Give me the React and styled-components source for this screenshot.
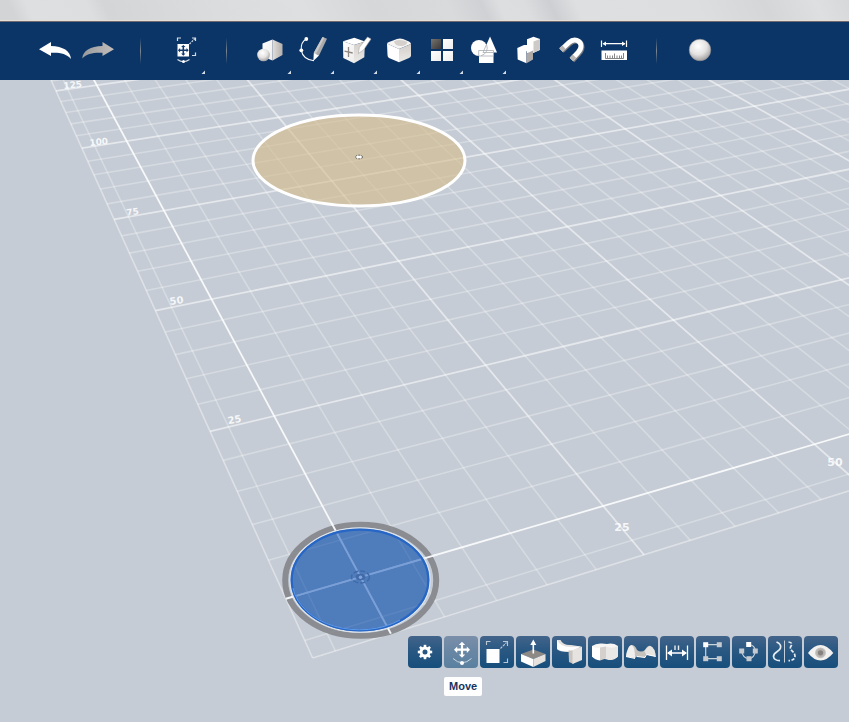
import React from "react";
import styled, { createGlobalStyle, css } from "styled-components";

const GlobalStyle = createGlobalStyle`
  * {
    box-sizing: border-box;
  }

  body {
    margin: 0;
    background: #c5ccd5;
    font-family: "Liberation Sans", Arial, sans-serif;
  }
`;

const Page = styled.div`
  display: flex;
  flex-direction: column;
  min-height: 100vh;
`;

const TopStrip = styled.div`
  height: 22px;
  border-bottom: 1px solid #6f6c70;
  box-shadow: inset 0 -1px 0 #e6dcd8;
  background: linear-gradient(
    65deg,
    #d2d4d6 0%,
    #d2d4d6 2%,
    #dddfe1 4%,
    #dcdee0 11%,
    #d3d5d7 13%,
    #dadcde 26%,
    #dddfe1 36%,
    #d5d7d9 44%,
    #d8dadc 53%,
    #cfd1d4 57%,
    #dcdee0 59%,
    #dbdddf 62%,
    #cdcfd2 65%,
    #dddfe1 68%,
    #dcdee0 82%,
    #d4d6d8 90%,
    #dddfe1 96%,
    #d6d8da 100%
  );
`;

const Toolbar = styled.nav`
  display: flex;
  height: 58px;
  padding-left: 33px;
  background: #0c3567;
`;

const ToolButton = styled.button`
  flex: none;
  width: 43px;
  height: 58px;
  padding: 0;
  border: 0;
  background: none;
  cursor: pointer;

  svg {
    display: block;
    overflow: visible;
  }
`;

const Separator = styled.span`
  flex: none;
  align-self: center;
  width: 1px;
  height: 26px;
  margin: 0 21px;
  background: linear-gradient(transparent, #7b8792, transparent);
`;

const Viewport = styled.main`
  position: relative;
  flex: 1;
  overflow: hidden;
`;

const Scene = styled.svg`
  position: absolute;
  inset: 0;
  width: 100%;
  height: 100%;
`;

const ContextBar = styled.div`
  position: absolute;
  right: 11px;
  bottom: 54px;
  display: flex;
  gap: 2px;
`;

const ContextItem = styled.div`
  position: relative;
`;

const ContextButton = styled.button`
  display: block;
  width: 34px;
  height: 32px;
  padding: 0;
  border: 0;
  border-radius: 4px;
  background: linear-gradient(#43648a, #2b5983 40%, #174e7b);
  cursor: pointer;

  ${(props) =>
    props.$active &&
    css`
      background: linear-gradient(#7b8fa9, #6987a5 45%, #5a809f);
    `}

  svg {
    display: block;
  }
`;

const Tooltip = styled.span`
  position: absolute;
  top: 41px;
  left: 0;
  padding: 0 5px;
  border-radius: 2px;
  background: #fff;
  color: #17345f;
  font-size: 11px;
  font-weight: bold;
  line-height: 19px;
`;

/* workplane: one unit = 25mm, projected to the screen */
const project = (u, v) => {
  const w = 1 + 0.075 * u + 0.1895 * v;
  return [
    (360.5 + 288 * u - 34.4 * v) / w,
    (577 - 33.05 * u - 82.2 * v) / w,
  ];
};

const EDGE = -0.28;
const FAR = 9;

const gridLines = () => {
  const steps = [EDGE];
  for (let i = -1; i <= FAR * 5; i++) steps.push(i / 5);

  return steps.flatMap((s) => {
    const major = s >= 0 && Number.isInteger(s);
    const opacity = s === 0 ? 0.85 : major ? 0.54 : s === EDGE ? 0.42 : 0.3;
    const width = s === 0 ? 1.8 : major ? 1.8 : 1.6;
    return [
      { from: project(s, EDGE), to: project(s, FAR), opacity, width },
      { from: project(EDGE, s), to: project(FAR, s), opacity, width },
    ];
  });
};

const LINES = gridLines();

const LABELS = [
  { text: "125", x: 73, y: 88, angle: -6, size: 9 },
  { text: "100", x: 99, y: 145, angle: -6, size: 9 },
  { text: "75", x: 133, y: 215, angle: -8, size: 9 },
  { text: "50", x: 177, y: 304, angle: -8, size: 10 },
  { text: "25", x: 235, y: 423, angle: -10, size: 10 },
  { text: "25", x: 622, y: 531, angle: 0, size: 11 },
  { text: "50", x: 835, y: 466, angle: 0, size: 11 },
];

const Line = ({ from, to, ...rest }) => (
  <line x1={from[0]} y1={from[1]} x2={to[0]} y2={to[1]} {...rest} />
);

const Grid = ({ tint = "#fff" }) => (
  <g stroke={tint}>
    {LINES.map((l, i) => (
      <Line key={i} from={l.from} to={l.to} strokeOpacity={l.opacity} strokeWidth={l.width} />
    ))}
  </g>
);

const Axes = ({ from = 0, to, ...rest }) => (
  <g {...rest}>
    <Line from={project(0, from)} to={project(0, to)} />
    <Line from={project(from, 0)} to={project(to, 0)} />
  </g>
);

const Workplane = () => (
  <Scene viewBox="0 80 849 642" preserveAspectRatio="xMidYMid slice">
    <defs>
      <clipPath id="disc">
        <ellipse cx="360" cy="580" rx="69" ry="51" />
      </clipPath>
      <clipPath id="sketch">
        <ellipse cx="359" cy="160.5" rx="106" ry="45.5" />
      </clipPath>
      <filter id="soft" x="-10%" y="-10%" width="120%" height="120%">
        <feGaussianBlur stdDeviation="0.6" />
      </filter>
    </defs>
    <Grid />
    <g
      fill="#fff"
      fillOpacity="0.85"
      fontFamily='"DejaVu Sans", sans-serif'
      fontWeight="bold"
      textAnchor="middle"
    >
      {LABELS.map((l, i) => (
        <text key={i} fontSize={l.size} transform={`translate(${l.x} ${l.y}) rotate(${l.angle})`}>
          {l.text}
        </text>
      ))}
    </g>

    <ellipse cx="359" cy="160.5" rx="106" ry="45.5" fill="#cfc2a7" />
    <g clipPath="url(#sketch)" opacity="0.75">
      <Grid tint="#ecdfc0" />
    </g>
    <ellipse cx="359" cy="160.5" rx="106" ry="45.5" fill="none" stroke="#fff" strokeWidth="3" />
    <ellipse cx="359" cy="157" rx="3.6" ry="1.8" fill="#fff" stroke="#55524c" strokeWidth="0.9" strokeDasharray="2 1" />

    <ellipse
      cx="360.7"
      cy="580.3"
      rx="75.5"
      ry="55.5"
      fill="none"
      stroke="#84878b"
      strokeOpacity="0.92"
      strokeWidth="6"
      filter="url(#soft)"
    />
    <Axes from={EDGE} to={0.3} stroke="#f4f6f9" strokeWidth="2" />
    <ellipse cx="360" cy="580" rx="70" ry="52" fill="#4f7cbb" stroke="#dde4ec" strokeWidth="1.4" />
    <g clipPath="url(#disc)" opacity="0.32">
      <Grid tint="#c9dcf8" />
    </g>
    <Axes clipPath="url(#disc)" from={EDGE} to={1} stroke="#7ba0d8" strokeWidth="1.8" />
    <ellipse cx="360" cy="580" rx="68.3" ry="50.3" fill="none" stroke="#2666c6" strokeWidth="2.2" />
    <path d="M293 588A67.5 49.5 0 0 0 400 620" fill="none" stroke="#6fa5ee" strokeWidth="0.8" />
    <ellipse cx="360.5" cy="577" rx="9" ry="6" fill="none" stroke="#4169a8" strokeWidth="1.4" strokeDasharray="5 2" />
    <ellipse cx="360.5" cy="577" rx="5" ry="3.2" fill="#4269a8" />
    <circle cx="360.5" cy="577.3" r="1.8" fill="#7fa5de" />
  </Scene>
);

const CrossArrows = ({ x, y, r, head, width, color }) => (
  <g transform={`translate(${x} ${y})`} fill={color}>
    {[0, 90, 180, 270].map((a) => (
      <path
        key={a}
        transform={`rotate(${a})`}
        d={`M0 ${-r}L${head} ${-r + head}H${width}V0H${-width}V${-r + head}H${-head}Z`}
      />
    ))}
  </g>
);

/* null is a divider */
const TOOLS = [
  {
    label: "Undo",
    icon: <path d="M6 27.2 18 20V24C30 24.3 37.6 29 38 37C33 31.4 27 30.4 18 30.8V34Z" fill="#fff" />,
  },
  {
    label: "Redo",
    icon: (
      <path d="M38 27.2 26.5 20V24C14.5 24.3 6.5 29 6.3 36.5C11 31.4 17.5 30.4 26.5 30.8V34Z" fill="url(#redo)" />
    ),
  },
  null,
  {
    label: "Transform",
    menu: true,
    icon: (
      <>
        <rect x="15.5" y="22" width="11.5" height="12.5" fill="#fff" />
        <CrossArrows x={21.3} y={28.3} r={5.4} head={2.2} width={0.8} color="#123a6c" />
        <g fill="none" stroke="#d3dbe4" strokeWidth="1.2">
          <path d="M15.5 19V16H19M30 16H33.5V19M33.5 30.5V33.5H30" />
          <path d="M27.5 22 33 16.5" strokeDasharray="2 1" />
          <path d="M15.5 37.5Q21.3 42 27.5 37.5" />
        </g>
        <circle cx="21.5" cy="39.5" r="1.5" fill="#fff" />
      </>
    ),
  },
  null,
  {
    label: "Primitives",
    menu: true,
    icon: (
      <>
        <path d="M14.5 21.5 24.5 17.5V38.5L14.5 34.5Z" fill="url(#light)" />
        <path d="M24.5 17.5 34.5 22V33L24.5 38.5Z" fill="url(#side)" />
        <circle cx="15.5" cy="33" r="6.3" fill="url(#ball)" />
      </>
    ),
  },
  {
    label: "Sketch",
    menu: true,
    icon: (
      <>
        <path d="M15.3 17Q9.5 20 10.3 28.3Q12 37.5 23 38.7" fill="none" stroke="#fff" strokeWidth="1.1" />
        <circle cx="15.3" cy="17" r="1.9" fill="#fff" />
        <circle cx="10.3" cy="28.3" r="1.9" fill="#fff" />
        <path d="M31.5 15 36 16.8 28 33.5 22.8 30.8Z" fill="#a9a9ab" />
        <path d="M31.5 15 33.3 15.7 25 32 22.8 30.8Z" fill="#c9c9ca" />
        <path d="M22.8 30.8 28 33.5 22.3 39Z" fill="#fff" />
      </>
    ),
  },
  {
    label: "Construct",
    menu: true,
    icon: (
      <>
        <path d="M9 19.3 20.3 15.7 31 19.5 20 23Z" fill="#fff" />
        <path d="M9 19.3 20 23V41.3L9.3 36Z" fill="url(#light)" />
        <path d="M20 23 31 19.5 30.3 35.3 20 41.3Z" fill="url(#dark)" />
        <path d="M14.5 25V35M10.5 29.2 18.7 31" stroke="#8f8783" strokeWidth="1.3" />
        <path d="M33.5 15 37 17 29.5 28 24.3 31.5 25.3 25.5Z" fill="#fff" stroke="#a8a5a3" strokeWidth="0.6" />
      </>
    ),
  },
  {
    label: "Modify",
    menu: true,
    icon: (
      <>
        <path d="M10 21.5Q10 20.5 12 20L20 17Q23 16 26 17L32 19.5Q34 20.5 34 22L22 27Z" fill="#f6f5f4" />
        <path d="M10 21.5 22 27V40.3L12 36Q10.5 35 10.5 33Z" fill="#fff" />
        <path d="M22 27 34 22V33.5Q34 35 32 36L22 40.3Z" fill="url(#dark)" />
        <path d="M17 19.5Q18 24 24 24Q29.5 24 30.5 20Q23 16.5 17 19.5Z" fill="#d4d0cc" />
      </>
    ),
  },
  {
    label: "Pattern",
    menu: true,
    icon: (
      <>
        <rect x="11" y="17" width="10" height="10" fill="url(#coal)" />
        <rect x="23" y="17" width="10" height="10" fill="url(#light)" />
        <rect x="11" y="29" width="10" height="10" fill="url(#light)" />
        <rect x="23" y="29" width="10" height="10" fill="url(#light)" />
      </>
    ),
  },
  {
    label: "Grouping",
    menu: true,
    icon: (
      <>
        <circle cx="16" cy="26" r="8" fill="#fff" />
        <path d="M27 14.5 34 30.5H20Z" fill="#fff" />
        <rect x="16" y="28.5" width="14.5" height="12.5" fill="#fff" />
        <path
          d="M23.7 23A8 8 0 0 1 18 33.7M23.7 22 20 30.5H30.5M15.7 34V28.5H30.5V34H15.7"
          fill="none"
          stroke="#a9adb1"
          strokeWidth="0.8"
        />
      </>
    ),
  },
  {
    label: "Combine",
    icon: (
      <>
        <path d="M21 17.3 27.5 14.7 34 17V28L27 31H21Z" fill="#fff" />
        <path d="M27.5 19.5 34 17V27.5L27.5 31Z" fill="#cdcac8" />
        <path d="M11.3 26 18 23H27L20.5 29.5V41.3L11.7 37.5Z" fill="#fff" />
        <path d="M20.5 31.5 27 28.5V37.5L20.5 41.3Z" fill="#aeaaa7" />
      </>
    ),
  },
  {
    label: "Snap",
    icon: (
      <>
        <path
          d="M12 28 20 20.5C25 16 32 18 32 24C32 27 31 28.5 29 30.5L22.5 37.5"
          transform="translate(1 1)"
          fill="none"
          stroke="#77797d"
          strokeWidth="5"
        />
        <path
          d="M12 28 20 20.5C25 16 32 18 32 24C32 27 31 28.5 29 30.5L22.5 37.5"
          fill="none"
          stroke="#fff"
          strokeWidth="5"
        />
        <path d="M12 28 15 25.2M22.5 37.5 25.5 34.3" stroke="#b9b7b6" strokeWidth="5" />
      </>
    ),
  },
  {
    label: "Measure",
    icon: (
      <>
        <path d="M9.5 18.5V25M34.5 18.5V25M11 21.7H33" stroke="#fff" strokeWidth="1.2" />
        <path d="M10.5 21.7 14 19.5V24ZM33.5 21.7 30 19.5V24Z" fill="#fff" />
        <rect x="9.5" y="28.5" width="25.5" height="9.5" fill="#fff" />
        <path
          d="M13.5 31V36.5H31.5V31M15.5 33.5V36M18 33.5V36M20.5 33.5V36M22.5 31.5V36M25 33.5V36M27.5 33.5V36M29.5 33.5V36"
          fill="none"
          stroke="#666"
          strokeWidth="0.8"
        />
      </>
    ),
  },
  null,
  {
    label: "Material",
    icon: <circle cx="22" cy="28" r="10.8" fill="url(#ball)" stroke="#8b8b8e" strokeWidth="0.5" />,
  },
];

const CONTEXT_TOOLS = [
  {
    label: "Settings",
    icon: (
      <g transform="translate(17 16)">
        <circle r="4" fill="none" stroke="#fff" strokeWidth="3" />
        {[0, 45, 90, 135, 180, 225, 270, 315].map((a) => (
          <rect key={a} x="-1.3" y="-7.2" width="2.6" height="3" fill="#fff" transform={`rotate(${a})`} />
        ))}
      </g>
    ),
  },
  {
    label: "Move",
    active: true,
    icon: (
      <>
        <CrossArrows x={18} y={13.7} r={8} head={3.2} width={1.1} color="#fff" />
        <path d="M9 22.5Q18 31 27.5 22.5" fill="none" stroke="#c9d6e2" strokeWidth="1" />
        <circle cx="18" cy="27" r="2" fill="#fff" />
      </>
    ),
  },
  {
    label: "Scale",
    icon: (
      <>
        <rect x="6.5" y="13" width="13" height="14" fill="#fff" />
        <g fill="none" stroke="#b9c8d6" strokeWidth="1.1">
          <path d="M6.5 9V5.5H10.5M23 5.5H27.5V10M27.5 22.5V26.5H23.5" />
          <path d="M20.5 12.5 26.5 6.5" strokeDasharray="2.5 1" />
        </g>
      </>
    ),
  },
  {
    label: "Extrude",
    icon: (
      <>
        <path d="M5 18 17.3 13.5 29.5 18 17.3 23Z" fill="#8d8985" />
        <path d="M5 18 17.3 23V31L5 25.5Z" fill="#fff" />
        <path d="M17.3 23 29.5 18V25L17.3 31Z" fill="#e6e3df" />
        <path d="M17.3 17.5V7" stroke="#fff" strokeWidth="1.6" />
        <path d="M17.3 3.5 20.3 9H14.3Z" fill="#fff" />
      </>
    ),
  },
  {
    label: "Sweep",
    icon: (
      <>
        <path d="M5 4H8.5Q11 9.5 19 9L29 10.5 22 16H17Q7 16 5 13Z" fill="#e4e2df" />
        <path d="M5 4Q8 10.5 18 11L29 10.5 18 15.5Q8 15.5 5 13Z" fill="#fff" />
        <path d="M16.5 14.5H21.5V28L17 26Z" fill="#c9c5c0" />
        <path d="M20.5 14.5 30 10.5V24L20.5 28Z" fill="#e6e3e0" />
      </>
    ),
  },
  {
    label: "Revolve",
    icon: (
      <>
        <path d="M4 10Q8 7 14 7.5L19 8Q25 6.500 30 10V20Q29 22.5 22 24L14 22.5Q10 25 4 20.5Z" fill="#f6f5f4" />
        <path d="M12 11.500 18 10.5V22.5L12 24.5Z" fill="#d3d0cd" />
        <path d="M18 10.5Q24 13 30 10V20.5Q26 24.5 21 24L18 22.5Z" fill="#eae8e6" />
        <path d="M4 10Q8 13 12 11.5V24.5Q7 24 4 20.5Z" fill="#fff" />
      </>
    ),
  },
  {
    label: "Loft",
    icon: (
      <>
        <path
          d="M2 20.5Q3.5 10 7.5 9Q11 9 13 14Q17 17 21 14Q24 9 26.5 10Q31 12 31.7 20.5L22 18.5 21 21.5 13 20.5 11 22Z"
          fill="#c6c3bf"
        />
        <path d="M2 20.5Q3.5 10 7.5 9Q11 10 11 22Z" fill="#f1f0ee" />
        <path d="M20.5 15Q24 10 26.5 10Q31 12 31.7 20.5L22 18.5Z" fill="#e7e5e2" />
        <path d="M2 20.5 11 22.5M13 20.5 21 21.5 22.5 18.5 31.7 20.5" fill="none" stroke="#fff" strokeWidth="1" />
      </>
    ),
  },
  {
    label: "Dimension",
    icon: (
      <>
        <path d="M6.500 9.5V24M27.5 9.5V24M8 17H26" stroke="#fff" strokeWidth="1.3" />
        <path d="M7 17 12 13.5V20.5ZM27 17 22 13.5V20.5Z" fill="#fff" />
        <path d="M15 9.5V14M18.5 9.5V14" stroke="#e8edf2" strokeWidth="1.4" />
      </>
    ),
  },
  {
    label: "Edit points",
    icon: (
      <>
        <path d="M23.3 8.7H9.7V22.7H23.3" fill="none" stroke="#cbd3db" strokeWidth="1.2" />
        <g fill="#c5cad0">
          <rect x="20.8" y="6.2" width="5" height="5" />
          <rect x="7.2" y="20.2" width="5" height="5" />
          <rect x="20.8" y="20.2" width="5" height="5" />
        </g>
        <rect x="7.2" y="6.2" width="5" height="5" fill="#fff" />
      </>
    ),
  },
  {
    label: "Close curve",
    icon: (
      <>
        <path
          d="M16.7 8.5Q23 9 23.3 15Q22.5 22 17 22.7Q10.5 22 9.7 15"
          fill="none"
          stroke="#cbd3db"
          strokeWidth="1.2"
        />
        <g fill="#c5cad0">
          <rect x="7.2" y="12.5" width="5" height="5" />
          <rect x="20.8" y="12.5" width="5" height="5" />
          <rect x="14.5" y="20.2" width="5" height="5" />
        </g>
        <rect x="14.2" y="6" width="5" height="5" fill="#fff" />
      </>
    ),
  },
  {
    label: "Mirror",
    icon: (
      <>
        <path d="M16.5 4.5V26.5" stroke="#c3cfda" strokeWidth="1" />
        <g fill="none" stroke="#e6ecf2" strokeWidth="1.7">
          <path d="M8.5 6Q13.5 8 12.5 12C11.5 16 5.5 16 5.5 20.5Q6 24.5 12 24.7" />
          <path d="M20.5 6Q25.5 6.5 22.5 11C21.5 15 27 15 27 20.5Q26.5 24.5 20.5 24.7" strokeDasharray="3.5 1.5" />
        </g>
      </>
    ),
  },
  {
    label: "Visibility",
    icon: (
      <>
        <path d="M4 17Q10 9 16.5 9Q23 9 29.3 17Q23 24.5 16.5 24.5Q10 24.5 4 17Z" fill="#f4f2f0" />
        <circle cx="16.5" cy="16.8" r="5.4" fill="#c4c1be" />
        <circle cx="16.5" cy="16.8" r="4.2" fill="#b5b2af" />
        <circle cx="16.5" cy="16.8" r="2.6" fill="#858280" />
      </>
    ),
  },
];

/* shared by every icon in both bars */
const GradientDefs = styled.svg`
  position: absolute;
  width: 0;
  height: 0;
`;

const Gradients = () => (
  <GradientDefs aria-hidden="true">
    <defs>
      <linearGradient id="light" x2="1" y2="1">
        <stop offset="0" stopColor="#fff" />
        <stop offset="1" stopColor="#eeeded" />
      </linearGradient>
      <linearGradient id="dark" x2="0" y2="1">
        <stop offset="0" stopColor="#d2ceca" />
        <stop offset="1" stopColor="#eceae8" />
      </linearGradient>
      <linearGradient id="side" x2="1" y2="0">
        <stop offset="0" stopColor="#e2dfdc" />
        <stop offset="1" stopColor="#b4afab" />
      </linearGradient>
      <linearGradient id="coal" x2="1" y2="1">
        <stop offset="0" stopColor="#777370" />
        <stop offset="1" stopColor="#3b3838" />
      </linearGradient>
      <linearGradient id="redo">
        <stop offset="0" stopColor="#989a9e" />
        <stop offset="1" stopColor="#c4bebb" />
      </linearGradient>
      <radialGradient id="ball" cx="0.42" cy="0.32" r="0.65">
        <stop offset="0" stopColor="#fff" />
        <stop offset="0.6" stopColor="#e4e3e2" />
        <stop offset="1" stopColor="#aaa8a8" />
      </radialGradient>
    </defs>
  </GradientDefs>
);

const App = () => {
  return (
    <Page>
      <GlobalStyle />
      <Gradients />
      <TopStrip />
      <Toolbar>
        {TOOLS.map((tool, i) =>
          tool ? (
            <ToolButton key={tool.label} type="button" aria-label={tool.label}>
              <svg width="43" height="58" viewBox="0 0 43 58">
                {tool.icon}
                {tool.menu && <path d="M43 48.5V52H39.5Z" fill="#d5dde6" />}
              </svg>
            </ToolButton>
          ) : (
            <Separator key={i} />
          )
        )}
      </Toolbar>
      <Viewport>
        <Workplane />
        <ContextBar>
          {CONTEXT_TOOLS.map((tool) => (
            <ContextItem key={tool.label}>
              <ContextButton type="button" aria-label={tool.label} $active={tool.active}>
                <svg width="34" height="32" viewBox="0 0 34 32">
                  {tool.icon}
                </svg>
              </ContextButton>
              {tool.active && <Tooltip>{tool.label}</Tooltip>}
            </ContextItem>
          ))}
        </ContextBar>
      </Viewport>
    </Page>
  );
};

export default App;
